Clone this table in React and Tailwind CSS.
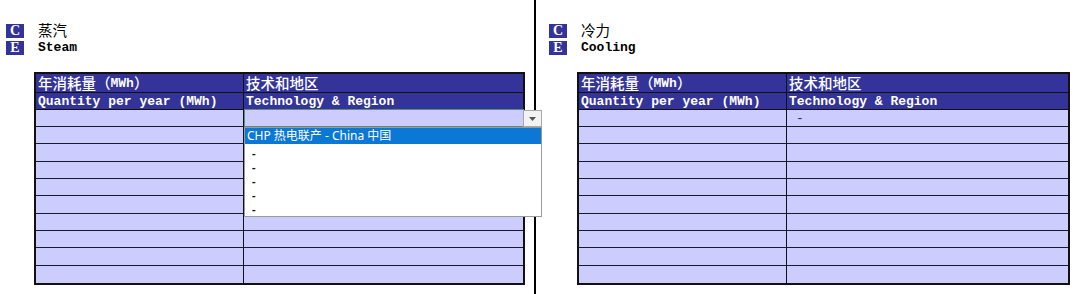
import React from "react";

const rowH = [
  "h-[17px]",
  "h-[17px]",
  "h-[18px]",
  "h-[17px]",
  "h-[17px]",
  "h-[18px]",
  "h-[17px]",
  "h-[17px]",
  "h-[18px]",
  "h-[17px]",
];

const cjk = "font-['Noto_Sans_CJK_SC',sans-serif]";
const mono = "font-['Liberation_Mono','Noto_Sans_CJK_SC',monospace]";

function Badge({ letter }) {
  return (
    <div className="w-[18px] h-[14px] bg-[#333399] flex items-center justify-center text-white font-['Liberation_Serif',serif] font-bold text-[14px] leading-none">
      {letter}
    </div>
  );
}

function Table({ widthClass, showDropdown, firstCell }) {
  return (
    <div className={`relative ${widthClass} border-2 border-[#111] bg-[#ccccff]`}>
      <div className="flex h-[19px] bg-[#333399] border-b border-[#111] text-white">
        <div className={`w-[208px] border-r border-[#111] pl-[2px] flex items-center ${cjk} font-medium text-[14.5px] leading-none`}>
          年消耗量（<span className={`${mono} font-bold text-[13px]`}>MWh</span>）
        </div>
        <div className={`flex-1 pl-[2px] flex items-center ${cjk} font-medium text-[14.5px] leading-none`}>
          技术和地区
        </div>
      </div>
      <div className="flex h-[17px] bg-[#333399] border-b border-[#111] text-white">
        <div className={`w-[208px] border-r border-[#111] pl-[2px] flex items-center ${mono} font-bold text-[13px] leading-none`}>
          Quantity per year (MWh)
        </div>
        <div className={`flex-1 pl-[2px] flex items-center ${mono} font-bold text-[13px] leading-none`}>
          Technology &amp; Region
        </div>
      </div>
      {rowH.map((h, i) => (
        <div
          key={i}
          className={`flex ${h} ${i < rowH.length - 1 ? "border-b border-[#1a1a2e]" : ""}`}
        >
          <div className="w-[208px] border-r border-[#111]" />
          <div className={`flex-1 pl-[9px] flex items-center ${mono} text-[13px] leading-none text-[#333]`}>
            {i === 0 ? firstCell : ""}
          </div>
        </div>
      ))}

      {showDropdown && (
        <>
          <div className="absolute left-[208px] top-[35px] w-[280px] h-[18px] border border-[#5e8c7c] pointer-events-none" />
          <div className="absolute left-[487px] top-[36px] w-[19px] h-[17px] bg-[#f3f3f3] border border-[#a8a8a8] flex items-center justify-center z-20">
            <svg width="7" height="4" viewBox="0 0 7 4">
              <path d="M0 0 L7 0 L3.5 4 Z" fill="#555" />
            </svg>
          </div>
          <div className="absolute left-[208px] top-[53px] w-[298px] h-[90px] bg-white border border-[#9a9a9a] z-20 font-['Noto_Sans','Noto_Sans_CJK_SC',sans-serif] text-[12px] leading-none">
            <div className="h-[16px] bg-[#0a78d4] text-white flex items-center pl-[2px]">
              CHP 热电联产 - China 中国
            </div>
            <div className="pt-[1px] flex flex-col">
              {[0, 1, 2, 3, 4].map((k) => (
                <div key={k} className="h-[14px] flex items-center pl-[7px] text-[#111] text-[11px] leading-none font-bold overflow-hidden">
                  -
                </div>
              ))}
            </div>
          </div>
        </>
      )}
    </div>
  );
}

function Section({ padClass, zh, en, tableWidth, showDropdown, firstCell }) {
  return (
    <div className={`h-full pt-[23px] ${padClass}`}>
      <div className="flex items-center h-[15px] gap-[14px] pl-[6px]">
        <Badge letter="C" />
        <div className={`${cjk} text-[14.5px] leading-none text-black`}>{zh}</div>
      </div>
      <div className="flex items-center h-[15px] gap-[14px] pl-[6px] mt-[2px]">
        <Badge letter="E" />
        <div className={`${mono} font-bold text-[13px] leading-none text-black`}>{en}</div>
      </div>
      <div className="mt-[17px] pl-[34px]">
        <Table widthClass={tableWidth} showDropdown={showDropdown} firstCell={firstCell} />
      </div>
    </div>
  );
}

export default function App() {
  return (
    <div className="w-[1080px] h-[294px] bg-white flex overflow-hidden">
      <div className="w-[534px] h-full relative z-10">
        <Section
          padClass="pl-0"
          zh="蒸汽"
          en="Steam"
          tableWidth="w-[491px]"
          showDropdown={true}
          firstCell=""
        />
      </div>
      <div className="w-[2px] h-full bg-black" />
      <div className="flex-1 h-full">
        <Section
          padClass="pl-[7px]"
          zh="冷力"
          en="Cooling"
          tableWidth="w-[493px]"
          showDropdown={false}
          firstCell="-"
        />
      </div>
    </div>
  );
}
